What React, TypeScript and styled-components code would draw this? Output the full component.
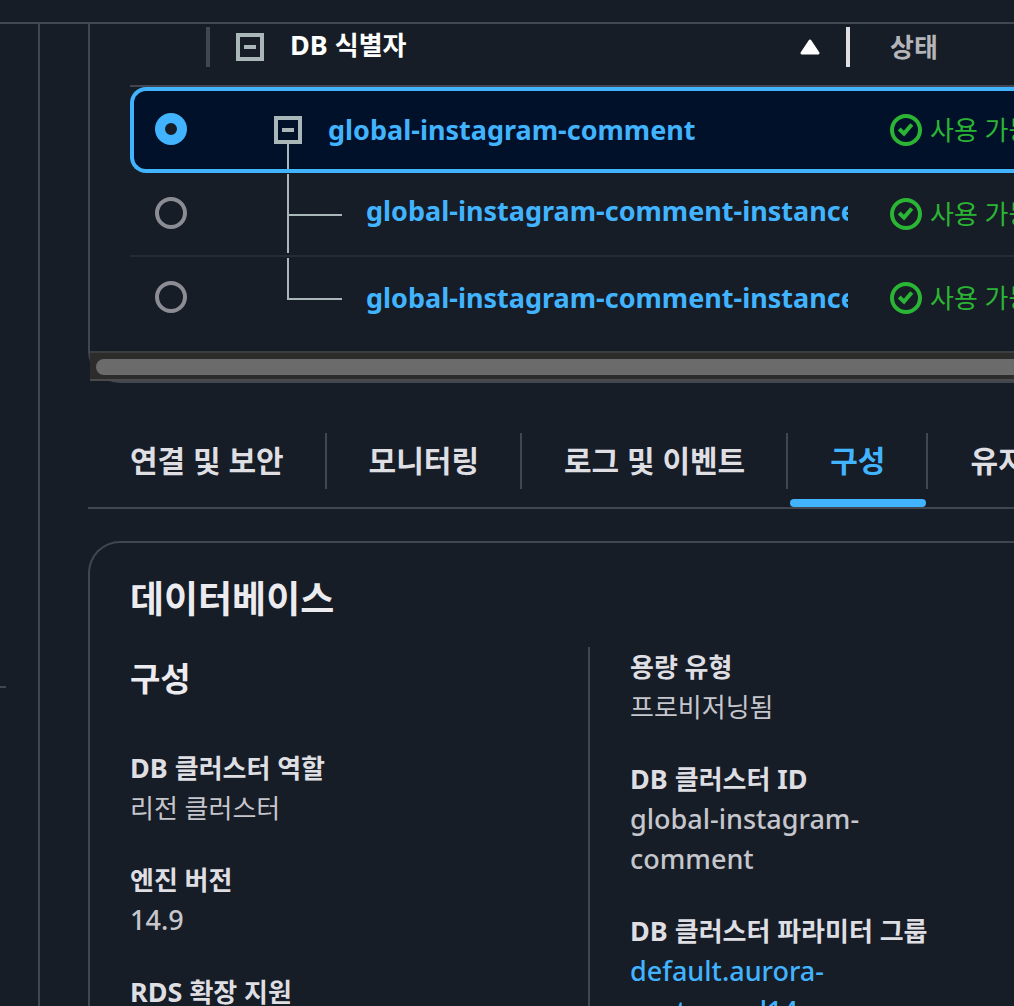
import React, { useState } from "react";
import styled, { createGlobalStyle, css } from "styled-components";

const color = {
  page: "#161d26",
  line: "#424650",
  rowLine: "#232b37",
  text: "#dedee3",
  heading: "#ebebf0",
  muted: "#c6c6cd",
  header: "#b4b4bb",
  tree: "#aab7b8",
  blue: "#42b4ff",
  green: "#2bb534",
  selected: "#001129",
};

const GlobalStyle = createGlobalStyle`
  *, *::before, *::after { box-sizing: border-box; }
  body {
    margin: 0;
    background: ${color.page};
    color: ${color.text};
    font-family: "Noto Sans", "Noto Sans CJK KR", sans-serif;
    font-size: 26px;
    line-height: 40px;
  }
`;

const Shell = styled.div`
  display: flex;
  flex-direction: column;
  height: 100vh;
  overflow: hidden;
`;

const TopBar = styled.header`
  flex: none;
  height: 24px;
  border-bottom: 2px solid ${color.line};
`;

const Body = styled.div`
  display: flex;
  flex: 1;
  min-height: 0;
`;

const SideNav = styled.aside`
  flex: none;
  width: 40px;
  border-right: 2px solid ${color.line};
`;

const NavRule = styled.hr`
  width: 6px;
  height: 2px;
  margin: 662px 0 0;
  border: 0;
  background: ${color.line};
`;

const Main = styled.main`
  flex: 1;
  min-width: 0;
  padding-left: 48px;
`;

const TablePanel = styled.section`
  border: solid ${color.line};
  border-width: 0 0 2px 2px;
  border-bottom-left-radius: 32px;
`;

const TableViewport = styled.div`
  overflow: hidden;
  padding: 0 0 12px 40px;
`;

const Table = styled.table`
  width: 100%;
  min-width: 1320px;
  table-layout: fixed;
  border-collapse: separate;
  border-spacing: 0;
`;

const HeadCell = styled.th<{ $width?: number; $active?: boolean }>`
  height: 63px;
  padding: 3px 0 0;
  width: ${(p) => (p.$width ? `${p.$width}px` : "auto")};
  border-bottom: 2px solid ${color.line};
  vertical-align: top;
  text-align: left;
  font-weight: 700;
  color: ${(p) => (p.$active ? "#ffffff" : color.header)};
`;

const HeadInner = styled.div<{ $divider?: string; $indent?: number }>`
  display: flex;
  align-items: center;
  height: 40px;
  padding-left: ${(p) => p.$indent ?? 0}px;
  border-right: ${(p) => (p.$divider ? `4px solid ${p.$divider}` : "0")};
`;

const SortButton = styled.button`
  display: flex;
  flex: 1;
  align-items: center;
  justify-content: space-between;
  padding: 0 26px;
  border: 0;
  background: none;
  color: inherit;
  font: inherit;
`;

const SortLabel = styled.span`
  padding-bottom: 4px;
`;

const ToggleBox = styled.button`
  flex: none;
  display: grid;
  place-items: center;
  width: 28px;
  height: 28px;
  padding: 0;
  border: 4px solid ${color.tree};
  background: none;

  &::before {
    content: "";
    width: 12px;
    height: 4px;
    background: ${color.tree};
  }
`;

const Cell = styled.td`
  height: 82px;
  padding: 0;
`;

const Row = styled.tr<{ $selected: boolean; $ruled: boolean }>`
  ${(p) =>
    p.$ruled &&
    css`
      ${Cell} {
        height: 84px;
        border-bottom: 2px solid ${color.rowLine};
      }
    `}
  ${(p) =>
    p.$selected &&
    css`
      ${Cell} {
        height: 86px;
        border: solid ${color.blue};
        border-width: 4px 0;
        background: ${color.selected};
      }
      ${Cell}:first-child {
        border-left-width: 4px;
        border-radius: 16px 0 0 16px;
      }
    `}
`;

const RadioLabel = styled.label<{ $selected: boolean }>`
  display: flex;
  align-items: center;
  height: 78px;
  padding-bottom: 2px;
  padding-left: ${(p) => (p.$selected ? 21 : 25)}px;
`;

const Radio = styled.input`
  appearance: none;
  width: 32px;
  height: 32px;
  margin: 0;
  border: 4px solid #8c8c94;
  border-radius: 50%;

  &:checked {
    border: 10px solid ${color.blue};
    background: ${color.page};
  }
`;

const TreeCell = styled.div<{ $branch: Branch }>`
  display: flex;
  align-items: center;
  height: ${(p) => (p.$branch === "root" ? 78 : 82)}px;
  padding-left: ${(p) => (p.$branch === "root" ? 64 : 76)}px;
  margin-right: 2px;
  overflow: hidden;
`;

const RootNode = styled.div`
  flex: none;
  display: flex;
  flex-direction: column;
  align-items: center;
  align-self: stretch;
  padding-top: 25px;

  &::after {
    content: "";
    flex: 1;
    width: 2px;
    background: ${color.tree};
  }
`;

const BranchSvg = styled.svg`
  flex: none;
  align-self: flex-start;
`;

const IdLink = styled.a<{ $branch: Branch }>`
  padding-left: ${(p) => (p.$branch === "root" ? 26 : 24)}px;
  padding-bottom: ${(p) => (p.$branch === "tee" ? 6 : 0)}px;
  color: ${color.blue};
  font-size: 27px;
  font-weight: 700;
  text-decoration: none;
  white-space: nowrap;
`;

const Status = styled.div`
  display: flex;
  align-items: center;
  gap: 8px;
  padding-left: 40px;
  color: ${color.green};
  white-space: nowrap;
`;

const ScrollTrack = styled.div`
  height: 30px;
  padding: 6px 0 0 6px;
  border: solid #4b4b4b;
  border-width: 2px 0;
  border-top-color: #3a3e41;
  background: #2c2d2b;
`;

const ScrollThumb = styled.div`
  height: 16px;
  border-radius: 8px 0 0 8px;
  background: #6b6b6b;
`;

const TabList = styled.div`
  display: flex;
  margin-top: 50px;
  padding-bottom: 18px;
  border-bottom: 2px solid ${color.line};
`;

const Tab = styled.button<{ $active: boolean }>`
  position: relative;
  flex: none;
  height: 56px;
  padding: 0 41px 0 42px;
  border: 0;
  border-right: 2px solid ${color.line};
  background: none;
  color: ${(p) => (p.$active ? color.blue : color.text)};
  font: inherit;
  font-size: 30px;
  font-weight: 700;
  white-space: nowrap;

  ${(p) =>
    p.$active &&
    css`
      &::after {
        content: "";
        position: absolute;
        left: 2px;
        right: 0;
        bottom: -18px;
        height: 8px;
        border-radius: 4px;
        background: ${color.blue};
      }
    `}
`;

const Card = styled.section`
  margin-top: 32px;
  padding: 32px 0 40px 40px;
  border: solid ${color.line};
  border-width: 2px 0 0 2px;
  border-top-left-radius: 32px;
`;

const CardTitle = styled.h2`
  margin: 0 0 24px;
  color: ${color.heading};
  font-size: 37px;
  font-weight: 700;
  line-height: 48px;
`;

const Columns = styled.div`
  display: grid;
  grid-template-columns: 458px minmax(0, 1fr);
`;

const Column = styled.div<{ $ruled?: boolean }>`
  min-height: 420px;
  padding-left: ${(p) => (p.$ruled ? 40 : 0)}px;
  border-left: ${(p) => (p.$ruled ? `2px solid ${color.line}` : "0")};
`;

const ColumnTitle = styled.h3`
  margin: 0 0 37px;
  color: ${color.heading};
  font-size: 33px;
  font-weight: 700;
  line-height: 64px;
`;

const Fields = styled.dl`
  display: grid;
  gap: 32px;
  margin: 0;
`;

const Term = styled.dt`
  font-weight: 700;
  white-space: nowrap;
`;

const Value = styled.dd`
  max-width: 320px;
  margin: 0;
  color: ${color.muted};
`;

const Latin = styled.span`
  font-size: 27px;

  ${Value} & {
    font-weight: 500;
  }
`;

const ValueLink = styled.a`
  color: ${color.blue};
  text-decoration: none;
`;

type Branch = "root" | "tee" | "elbow";

const databases: { id: string; branch: Branch }[] = [
  { id: "global-instagram-comment", branch: "root" },
  { id: "global-instagram-comment-instance-1", branch: "tee" },
  { id: "global-instagram-comment-instance-2", branch: "elbow" },
];

const tabs = ["연결 및 보안", "모니터링", "로그 및 이벤트", "구성", "유지 관리 및 백업"];

function BranchLines({ branch }: { branch: Branch }) {
  const end = branch === "tee" ? 80 : 42;
  return (
    <BranchSvg width="56" height="82" viewBox="0 0 56 82" fill="none" aria-hidden="true">
      <path d={`M2 1V${end}M1 42H56`} stroke={color.tree} strokeWidth="2" />
    </BranchSvg>
  );
}

function CheckIcon() {
  return (
    <svg width="32" height="32" viewBox="0 0 32 32" fill="none" stroke={color.green} strokeWidth="4" aria-hidden="true">
      <circle cx="16" cy="16" r="14" />
      <path d="M9.2 15L14 19.6L21.8 10.5" />
    </svg>
  );
}

function SortIcon() {
  return (
    <svg width="20" height="16" viewBox="0 0 20 16" aria-hidden="true">
      <path d="M10 2L18 14H2Z" fill="#fff" stroke="#fff" strokeWidth="3" strokeLinejoin="round" />
    </svg>
  );
}

export default function App() {
  const [selected, setSelected] = useState(0);
  const [active, setActive] = useState(3);

  return (
    <>
      <GlobalStyle />
      <Shell>
        <TopBar />
        <Body>
          <SideNav>
            <NavRule />
          </SideNav>
          <Main>
            <TablePanel>
              <TableViewport>
                <Table>
                  <thead>
                    <tr>
                      <HeadCell $width={80}>
                        <HeadInner $divider={color.line} />
                      </HeadCell>
                      <HeadCell $width={640} $active aria-sort="ascending">
                        <HeadInner $divider={color.text} $indent={26}>
                          <ToggleBox aria-label="모두 접기" />
                          <SortButton>
                            <SortLabel>
                              <Latin>{"DB "}</Latin>식별자
                            </SortLabel>
                            <SortIcon />
                          </SortButton>
                        </HeadInner>
                      </HeadCell>
                      <HeadCell>
                        <HeadInner $indent={40}>상태</HeadInner>
                      </HeadCell>
                    </tr>
                  </thead>
                  <tbody>
                    {databases.map((db, i) => (
                      <Row key={db.id} $selected={i === selected} $ruled={i === 1}>
                        <Cell>
                          <RadioLabel $selected={i === selected}>
                            <Radio
                              type="radio"
                              name="database"
                              aria-label={db.id}
                              checked={i === selected}
                              onChange={() => setSelected(i)}
                            />
                          </RadioLabel>
                        </Cell>
                        <Cell>
                          <TreeCell $branch={db.branch}>
                            {db.branch === "root" ? (
                              <RootNode>
                                <ToggleBox aria-label="접기" />
                              </RootNode>
                            ) : (
                              <BranchLines branch={db.branch} />
                            )}
                            <IdLink href="#" $branch={db.branch}>
                              {db.id}
                            </IdLink>
                          </TreeCell>
                        </Cell>
                        <Cell>
                          <Status>
                            <CheckIcon />
                            사용 가능
                          </Status>
                        </Cell>
                      </Row>
                    ))}
                  </tbody>
                </Table>
              </TableViewport>
              <ScrollTrack>
                <ScrollThumb />
              </ScrollTrack>
            </TablePanel>

            <TabList role="tablist">
              {tabs.map((name, i) => (
                <Tab
                  key={name}
                  role="tab"
                  aria-selected={i === active}
                  $active={i === active}
                  onClick={() => setActive(i)}
                >
                  {name}
                </Tab>
              ))}
            </TabList>

            <Card>
              <CardTitle>데이터베이스</CardTitle>
              <Columns>
                <Column>
                  <ColumnTitle>구성</ColumnTitle>
                  <Fields>
                    <div>
                      <Term>
                        <Latin>{"DB "}</Latin>클러스터 역할
                      </Term>
                      <Value>리전 클러스터</Value>
                    </div>
                    <div>
                      <Term>엔진 버전</Term>
                      <Value>
                        <Latin>14.9</Latin>
                      </Value>
                    </div>
                    <div>
                      <Term>
                        <Latin>{"RDS "}</Latin>확장 지원
                      </Term>
                    </div>
                  </Fields>
                </Column>
                <Column $ruled>
                  <Fields>
                    <div>
                      <Term>용량 유형</Term>
                      <Value>프로비저닝됨</Value>
                    </div>
                    <div>
                      <Term>
                        <Latin>{"DB "}</Latin>클러스터 <Latin>ID</Latin>
                      </Term>
                      <Value>
                        <Latin>global-instagram-comment</Latin>
                      </Value>
                    </div>
                    <div>
                      <Term>
                        <Latin>{"DB "}</Latin>클러스터 파라미터 그룹
                      </Term>
                      <Value>
                        <ValueLink href="#">
                          <Latin>default.aurora-postgresql14</Latin>
                        </ValueLink>
                      </Value>
                    </div>
                  </Fields>
                </Column>
              </Columns>
            </Card>
          </Main>
        </Body>
      </Shell>
    </>
  );
}
